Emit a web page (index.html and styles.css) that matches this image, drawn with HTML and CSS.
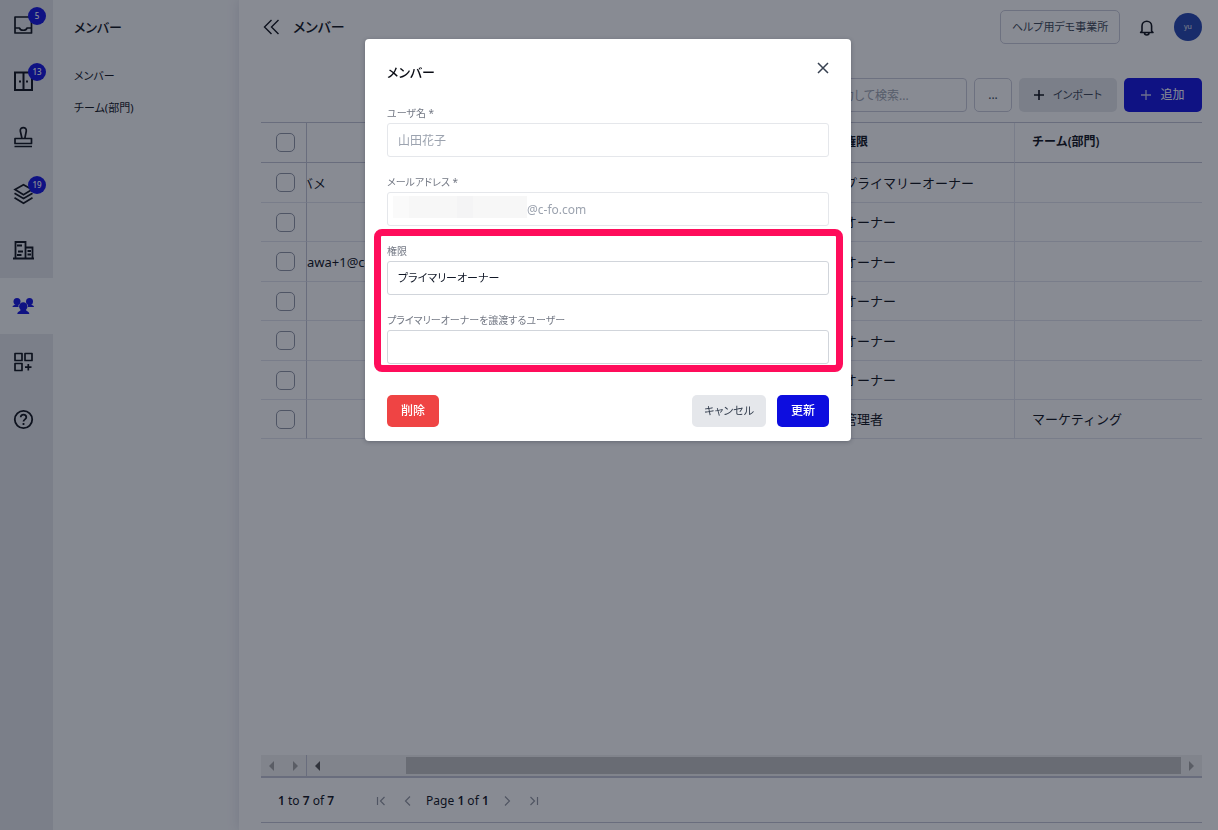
FILE: index.html
```html
<!DOCTYPE html>
<html lang="ja">
<head>
<meta charset="utf-8">
<title>メンバー</title>
<link rel="stylesheet" href="styles.css">
</head>
<body>
<div class="app">
  <nav class="rail" aria-label="メイン">
    <a class="rail-item" href="#" aria-label="受信箱"><span class="rail-icon">
      <svg width="22" height="22" viewBox="0 0 22 22" fill="none" stroke="currentColor" stroke-width="1.700" stroke-linejoin="round"><path d="M3 3h16.500v16H3zM3 14h4.500c.8 3 6.700 3 7.500 0h4.500"/></svg>
      <span class="badge">5</span></span></a>
    <a class="rail-item" href="#" aria-label="キャビネット"><span class="rail-icon">
      <svg width="22" height="22" viewBox="0 0 22 22" fill="none" stroke="currentColor" stroke-width="2"><path d="M3 2.500h17v17.500H3zM11.500 2.500v18M7 11.500h2M14 11.500h2"/></svg>
      <span class="badge">13</span></span></a>
    <a class="rail-item" href="#" aria-label="承認"><span class="rail-icon">
      <svg width="22" height="22" viewBox="0 0 22 22" fill="none" stroke="currentColor" stroke-width="1.700" stroke-linejoin="round"><path d="M3 12.500h16.500v5H3zM2.500 20.500h17.500M10 12.500L8.300 5c-.5-4.500 6.500-4.500 6 0l-1.500 7.500"/></svg></span></a>
    <a class="rail-item" href="#" aria-label="書類"><span class="rail-icon">
      <svg width="22" height="22" viewBox="0 0 22 22" fill="none" stroke="currentColor" stroke-width="1.700"><path d="M11.500 1.800l8.500 4.800-8.500 5.200L3 6.600zM2.500 10.300l9 5.200 9-5.200M2.500 14.800l9 5.500 9-5.500"/></svg>
      <span class="badge">19</span></span></a>
    <a class="rail-item" href="#" aria-label="事業所"><span class="rail-icon">
      <svg width="22" height="22" viewBox="0 0 22 22" fill="none" stroke="currentColor" stroke-width="1.800"><path d="M1 19.500h21M3.500 19V3h10v16M13.500 8.500H20.500V19M5 6.500h5M6 12.500h5M5 16h4.500M15.500 12h3.500M15.500 15.500h3.500"/></svg></span></a>
    <a class="rail-item active" href="#" aria-label="メンバー"><span class="rail-icon">
      <svg width="22" height="22" viewBox="0 0 22 22" fill="currentColor"><circle cx="5" cy="6.500" r="3.500"/><circle cx="17.500" cy="6.500" r="3.500"/><path d="M3.500 8h3v4H.5c0-1.500 1.800-1.600 3-2.400zM19 8h-3v4h6c0-1.500-1.800-1.600-3-2.400z"/><circle cx="11.300" cy="11.500" r="4.200"/><path d="M9.300 13h4c0 3.500 4 3 4 6h-12c0-3 4-2.500 4-6z"/></svg></span></a>
    <a class="rail-item" href="#" aria-label="アプリ"><span class="rail-icon">
      <svg width="22" height="22" viewBox="0 0 22 22" fill="none" stroke="currentColor" stroke-width="1.700" stroke-linejoin="round"><path d="M3 2.500h7v7H3zM13 2.500h7v7h-7zM3 12.500h7v7H3zM16.300 13v6.500M13 16.200h6.500"/></svg></span></a>
    <a class="rail-item" href="#" aria-label="ヘルプ"><span class="rail-icon">
      <svg width="22" height="22" viewBox="0 0 22 22" fill="none" stroke="currentColor" stroke-width="1.800"><circle cx="11.500" cy="11.500" r="8.700"/><path d="M8.700 9.300c0-3.800 5.600-3.500 5.600 0 0 2-2.800 2.200-2.800 4.200M11.500 15v2"/></svg></span></a>
  </nav>

  <aside class="menu">
    <h2 class="menu-title">メンバー</h2>
    <a class="menu-link" href="#">メンバー</a>
    <a class="menu-link" href="#">チーム(部門)</a>
  </aside>

  <main class="main">
    <header class="top">
      <button class="icon-button" aria-label="折りたたむ"><svg width="18" height="18" viewBox="0 0 18 18" fill="none" stroke="currentColor" stroke-width="1.400"><path d="M8.500 2l-7 7 7 7M15.500 2l-7 7 7 7"/></svg></button>
      <h1 class="page-title">メンバー</h1>
      <button class="button outline office">ヘルプ用デモ事業所</button>
      <button class="icon-button bell" aria-label="通知"><svg width="18" height="18" viewBox="0 0 18 18" fill="none" stroke="currentColor" stroke-width="1.600" stroke-linejoin="round"><path d="M4 13V8a4.800 4.800 0 019.600 0v5l1.400 1.500H2.600zM6.500 15c0 2.600 4.500 2.600 4.500 0"/></svg></button>
      <button class="avatar">yu</button>
    </header>

    <div class="toolbar">
      <input class="search" type="search" aria-label="検索" placeholder="キーワードを入力して検索...">
      <button class="button outline more">...</button>
      <button class="button gray import"><svg width="10" height="10" viewBox="0 0 10 10" stroke="currentColor" stroke-width="1.600"><path d="M5 0v10M0 5h10"/></svg>インポート</button>
      <button class="button primary add"><svg width="10" height="10" viewBox="0 0 10 10" stroke="currentColor" stroke-width="1.300"><path d="M5 0v10M0 5h10"/></svg>追加</button>
    </div>

    <section class="grid">
      <table class="members">
        <colgroup><col class="col-check"><col><col class="col-role"><col class="col-team"></colgroup>
        <thead>
          <tr><th class="check"><input type="checkbox" aria-label="すべて選択"></th><th></th><th>権限</th><th>チーム(部門)</th></tr>
        </thead>
        <tbody>
          <tr><td class="check"><input type="checkbox" aria-label="行1"></td><td class="scrolled name">バメ</td><td>プライマリーオーナー</td><td></td></tr>
          <tr><td class="check"><input type="checkbox" aria-label="行2"></td><td></td><td>オーナー</td><td></td></tr>
          <tr><td class="check"><input type="checkbox" aria-label="行3"></td><td class="scrolled">awa+1@c-fo.com</td><td>オーナー</td><td></td></tr>
          <tr><td class="check"><input type="checkbox" aria-label="行4"></td><td></td><td>オーナー</td><td></td></tr>
          <tr><td class="check"><input type="checkbox" aria-label="行5"></td><td></td><td>オーナー</td><td></td></tr>
          <tr><td class="check"><input type="checkbox" aria-label="行6"></td><td></td><td>オーナー</td><td></td></tr>
          <tr><td class="check"><input type="checkbox" aria-label="行7"></td><td></td><td>管理者</td><td>マーケティング</td></tr>
        </tbody>
      </table>
      <div class="scrollbars">
        <div class="pinned-scroll"><i class="arrow left"></i><i class="arrow right"></i></div>
        <div class="track"><i class="arrow left dark"></i><div class="thumb"></div><i class="arrow right"></i></div>
      </div>
    </section>

    <footer class="pager">
      <span class="count"><b>1</b> to <b>7</b> of <b>7</b></span>
      <button class="page-button" aria-label="最初"><svg width="10" height="10" viewBox="0 0 10 10"><path d="M1.500 1v8M8.500 1l-4 4 4 4"/></svg></button>
      <button class="page-button" aria-label="前"><svg width="10" height="10" viewBox="0 0 10 10"><path d="M7 .5L2.500 5 7 9.500"/></svg></button>
      <span class="page-number">Page <b>1</b> of <b>1</b></span>
      <button class="page-button" aria-label="次"><svg width="10" height="10" viewBox="0 0 10 10"><path d="M3 .5L7.500 5 3 9.500"/></svg></button>
      <button class="page-button" aria-label="最後"><svg width="10" height="10" viewBox="0 0 10 10"><path d="M8.500 1v8M1.500 1l4 4-4 4"/></svg></button>
    </footer>
  </main>
</div>

<div class="overlay">
  <form class="modal" role="dialog" aria-labelledby="modal-title">
    <div class="modal-head">
      <h2 class="modal-title" id="modal-title">メンバー</h2>
      <button class="icon-button" type="button" aria-label="閉じる"><svg width="12" height="12" viewBox="0 0 12 12" fill="none" stroke="currentColor" stroke-width="1.500"><path d="M1 1l10 10M11 1L1 11"/></svg></button>
    </div>
    <div class="field">
      <label for="user">ユーザ名 *</label>
      <input class="control" id="user" type="text" value="山田花子" disabled>
    </div>
    <div class="field">
      <label for="mail">メールアドレス *</label>
      <div class="masked">
        <input class="control" id="mail" type="text" value="@c-fo.com" disabled>
        <span class="mosaic"></span>
      </div>
    </div>
    <div class="highlight">
      <div class="field">
        <label for="role">権限</label>
        <select class="control" id="role"><option>プライマリーオーナー</option></select>
      </div>
      <div class="field">
        <label for="transfer">プライマリーオーナーを譲渡するユーザー</label>
        <select class="control" id="transfer"><option></option></select>
      </div>
    </div>
    <div class="actions">
      <button class="button danger" type="button">削除</button>
      <button class="button gray cancel" type="button">キャンセル</button>
      <button class="button primary submit" type="submit">更新</button>
    </div>
  </form>
</div>
</body>
</html>
```

FILE: styles.css
```css
* { box-sizing: border-box; }

body {
  margin: 0;
  color: #090c14;
  font: 12px/16px "Noto Sans", "Noto Sans CJK JP", sans-serif;
  font-feature-settings: "palt";
}

h1, h2 { margin: 0; font-weight: 500; }
a { color: inherit; text-decoration: none; }
button, input, select { font: inherit; font-feature-settings: inherit; color: inherit; }
button { cursor: pointer; }
svg { display: block; }

.app { display: flex; height: 100vh; background: #fff; }

/* icon rail */
.rail { flex: 0 0 53px; background: #e5e7eb; }
.rail-item { display: flex; align-items: center; justify-content: center; height: 56px; padding-right: 7px; }
.rail-item:first-child { height: 53px; padding-bottom: 3px; }
.rail-item:nth-child(4n) { height: 57px; }
.rail-item.active { background: #f9fafb; color: #0d0ddf; }
.rail-icon { position: relative; }
.badge {
  position: absolute;
  top: -7px;
  left: 16px;
  width: 18px;
  height: 18px;
  border-radius: 50%;
  background: #0d0ddf;
  color: #fff;
  font-size: 8px;
  font-weight: 500;
  line-height: 18px;
  text-align: center;
}

/* section menu */
.menu { flex: 0 0 186px; padding: 16px 21px; background: #f9fafb; }
.menu-title { margin-bottom: 22px; font-size: 13px; line-height: 22px; }
.menu-link { display: block; padding: 8px 0; font-size: 11px; }

/* main area */
.main {
  flex: 1;
  min-width: 0;
  display: flex;
  flex-direction: column;
  padding: 0 16px 7px 22px;
  background: #fff;
  box-shadow: 0 0 12px rgba(60, 60, 110, .16);
}
.top { display: flex; align-items: center; height: 54px; }
.page-title { flex: 1; margin-left: 10px; font-size: 14px; line-height: 22px; }
.icon-button { display: flex; padding: 2px; border: 0; background: none; }
.bell { margin: 0 16px; }
.avatar { width: 28px; height: 28px; padding: 0; border: 0; border-radius: 50%; background: #1e40af; color: #e5e7eb; font-size: 7px; }

.button {
  display: flex;
  align-items: center;
  justify-content: center;
  gap: 9px;
  height: 32px;
  padding: 0 14px;
  border: 0;
  border-radius: 5px;
  white-space: nowrap;
}
.outline { height: 34px; padding: 0 10px; border: 1px solid #c9cad8; background: #fff; color: #374151; }
.gray { background: #e5e7eb; color: #374151; font-size: 11px; }
.primary { background: #0d0ddf; color: #fff; }
.danger { background: #ef4444; color: #fff; font-weight: 500; }
.office { min-width: 120px; font-size: 11px; }
.cancel { padding: 0 12px; }
.submit { font-weight: 500; }

.toolbar { display: flex; justify-content: flex-end; gap: 7px; padding: 24px 0 10px; }
.toolbar .button { height: 34px; }
.search { width: 220px; height: 34px; padding: 0 16px; border: 1px solid #c9cad8; border-radius: 4px; background: #fff; }
.search::placeholder { color: #9ca3af; opacity: 1; }
.more { width: 38px; }
.import { width: 98px; }
.import svg { color: #090c14; }
.add { width: 78px; }
.add svg { color: #c4c5f5; }

/* member grid */
.grid { flex: 1; display: flex; flex-direction: column; justify-content: space-between; border-top: 1px solid #c1c2d2; border-bottom: 2px solid #c1c2d2; }
.members { width: 100%; table-layout: fixed; border-collapse: separate; border-spacing: 0; font-size: 13px; font-feature-settings: normal; }
.col-check { width: 46px; }
.col-role { width: 188px; }
.col-team { width: 187px; }
.members th, .members td { height: 39px; padding: 0 17px; text-align: left; white-space: nowrap; overflow: hidden; border-bottom: 1px solid #e1e2ec; }
.members th { height: 40px; padding-bottom: 2px; font-size: 12px; font-weight: 600; border-color: #c1c2d2; }
.members tbody tr:nth-child(odd):not(:last-child) td { height: 40px; }
.members th:nth-child(3), .members td:nth-child(3) { border-right: 1px solid #e1e2ec; }
.members .check { padding: 0 0 0 15px; border-right: 1px solid #c1c2d2; }
.members .scrolled { padding: 0; }
.members .name { text-indent: -7px; }
.check input { appearance: none; display: block; width: 19px; height: 19px; margin: 0; border: 1px solid #8d92a3; border-radius: 5px; background: #fff; }

.scrollbars { display: flex; height: 21px; background: #f1f1f1; }
.pinned-scroll { display: flex; align-items: center; justify-content: space-between; width: 46px; padding: 0 8px; border-right: 1px solid #c1c2d2; }
.track { flex: 1; display: flex; align-items: center; justify-content: space-between; padding: 0 8px; }
.thumb { flex: 1; height: 17px; margin: 0 8px 0 86px; background: #c1c1c1; }
.arrow { border: 5px solid transparent; }
.arrow.left { border-left: 0; border-right-color: #a3a3a3; }
.arrow.right { border-right: 0; border-left-color: #a3a3a3; }
.arrow.dark { border-right-color: #505050; }

.pager { display: flex; align-items: center; gap: 1px; height: 45px; padding: 2px 0 0 17px; border-bottom: 1px solid #c1c2d2; }
.pager b { font-weight: 600; }
.count { margin-right: 33px; }
.page-number { margin: 0 4px; }
.page-button { padding: 0 8px; border: 0; background: none; color: #8f939e; }
.page-button svg { fill: none; stroke: currentColor; stroke-width: 1.2; }

/* dialog */
.overlay {
  position: fixed;
  inset: 0;
  display: flex;
  align-items: flex-start;
  justify-content: center;
  padding: 39px 17px 16px 15px;
  background: rgba(17, 24, 39, .5);
}
.modal { width: 100%; max-width: 486px; padding: 22px 22px 14px; border-radius: 4px; background: #fff; box-shadow: 0 1px 4px rgba(17, 24, 39, .3); }
.modal-head { display: flex; align-items: flex-start; justify-content: space-between; margin-bottom: 22px; }
.modal-head .icon-button { padding: 1px 0; color: #374151; }
.modal-title { font-size: 13px; line-height: 22px; }
.field { padding-bottom: 18px; }
.field label { display: block; padding: 1px 0 3px; color: #737884; font-size: 10px; line-height: 13px; }
.modal-head + .field { padding-top: 1px; }
.control { appearance: none; display: block; width: 100%; height: 34px; padding: 0 10px; border: 1px solid #d1d5db; border-radius: 3px; background: #fff; }
select.control { font-size: 11px; color: #111827; }
.control:disabled { border-color: #e5e7eb; color: #9ca3af; opacity: 1; }
.masked { position: relative; }
.masked .control { padding-left: 139px; }
.mosaic { position: absolute; left: 6px; top: 4px; width: 134px; height: 22px; background: linear-gradient(90deg, #fafafa 12%, #f7f7f7 12% 48%, #f4f4f5 48% 60%, #f7f7f7 60%); }

.highlight { position: relative; }
.highlight::after { content: ""; position: absolute; inset: -15px -14px 10px -13px; border: 7px solid #ff0d5b; border-radius: 8px; pointer-events: none; }

.actions { display: flex; gap: 11px; padding-top: 13px; }
.actions .danger { margin-right: auto; }
```
